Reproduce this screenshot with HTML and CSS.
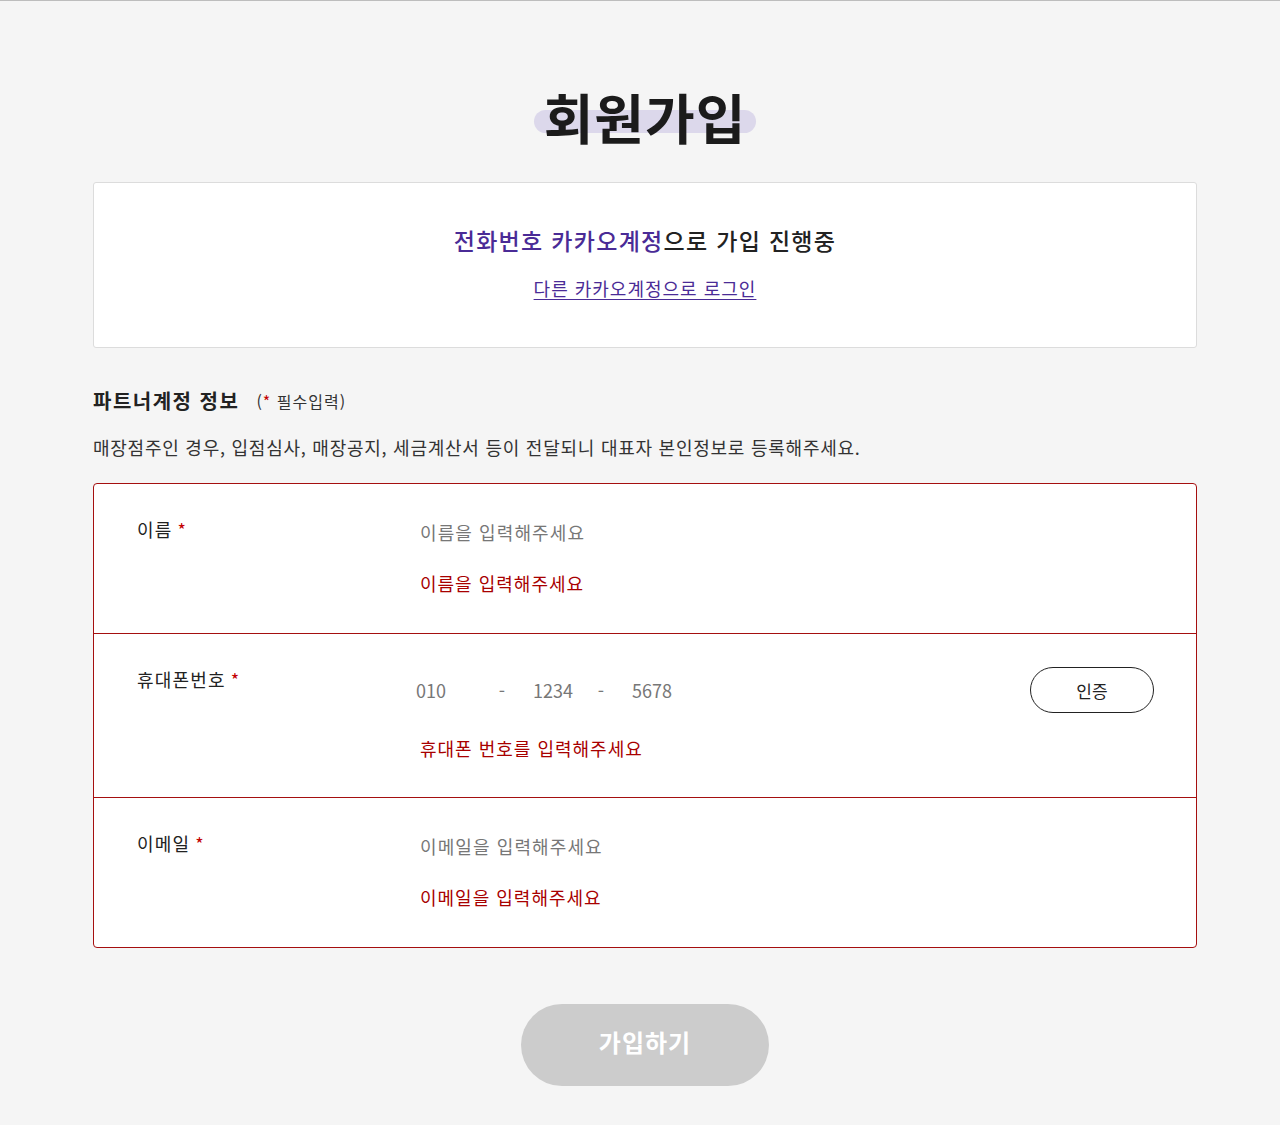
FILE: index.html
```html
<!DOCTYPE html>
<html lang="ko">
<head>
    <meta charset="UTF-8">
    <meta name="viewport" content="width=device-width, initial-scale=1.0">
    <title>회원가입</title>
    <link rel="stylesheet" href="styles.css">
</head>
<body>
    <div class="wrap">
        <h1 class="page-title"><span class="title-mark">회원가입</span></h1>

        <div class="kakao-box">
            <p class="kakao-status"><span class="point">전화번호 카카오계정</span>으로 가입 진행중</p>
            <a href="#" class="kakao-link">다른 카카오계정으로 로그인</a>
        </div>

        <div class="section-head">
            <h2 class="section-title">파트너계정 정보</h2>
            <span class="required-note">(<em>*</em> 필수입력)</span>
        </div>
        <p class="section-desc">매장점주인 경우, 입점심사, 매장공지, 세금계산서 등이 전달되니 대표자 본인정보로 등록해주세요.</p>

        <form class="join-form">
            <div class="form-row">
                <label class="form-label" for="name">이름<em>*</em></label>
                <div class="form-field">
                    <div class="field-line">
                        <input type="text" id="name" class="text-input" placeholder="이름을 입력해주세요">
                    </div>
                    <p class="error-msg">이름을 입력해주세요</p>
                </div>
            </div>
            <div class="form-row form-row-phone">
                <label class="form-label" for="phone1">휴대폰번호<em>*</em></label>
                <div class="form-field">
                    <div class="field-line field-phone">
                        <div class="phone">
                            <input type="text" id="phone1" class="phone-input phone-first" placeholder="010">
                            <span class="phone-dash">-</span>
                            <input type="text" class="phone-input" placeholder="1234">
                            <span class="phone-dash">-</span>
                            <input type="text" class="phone-input" placeholder="5678">
                        </div>
                        <button type="button" class="verify-btn">인증</button>
                    </div>
                    <p class="error-msg">휴대폰 번호를 입력해주세요</p>
                </div>
            </div>
            <div class="form-row">
                <label class="form-label" for="email">이메일<em>*</em></label>
                <div class="form-field">
                    <div class="field-line">
                        <input type="text" id="email" class="text-input" placeholder="이메일을 입력해주세요">
                    </div>
                    <p class="error-msg">이메일을 입력해주세요</p>
                </div>
            </div>
        </form>

        <div class="submit-area">
            <button type="button" class="submit-btn" disabled>가입하기</button>
        </div>
    </div>
</body>
</html>
```

FILE: styles.css
```css
* {
    box-sizing: border-box;
}
body {
    margin: 0;
    border-top: 1px solid #bdbdbd;
    background-color: #f5f5f5;
    font-family: "Noto Sans CJK KR", "Noto Sans", sans-serif;
    color: #222;
}
.wrap {
    width: 1104px;
    margin: 0 auto;
    padding-top: 83px;
    padding-bottom: 39px;
    position: relative;
    left: 5px;
}
.page-title {
    margin: 0;
    text-align: center;
    font-size: 54px;
    line-height: 65px;
    font-weight: 700;
    letter-spacing: 1px;
    color: #1b1b1b;
}
.title-mark {
    position: relative;
    z-index: 0;
    display: inline-block;
}
.title-mark::before {
    content: "";
    position: absolute;
    z-index: -1;
    left: -10px;
    right: -10px;
    top: 26px;
    height: 23px;
    border-radius: 12px;
    background-color: #dcd8eb;
}
.kakao-box {
    margin-top: 33px;
    background-color: #fff;
    border: 1px solid #dcdcdc;
    border-radius: 3px;
    padding: 40px 0 45px;
    text-align: center;
}
.kakao-status {
    margin: 0;
    font-size: 23px;
    line-height: 34px;
    font-weight: 500;
    letter-spacing: 1.3px;
    color: #222;
}
.point {
    color: #4a2b96;
}
.kakao-link {
    display: inline-block;
    margin-top: 18px;
    font-size: 18px;
    line-height: 27px;
    letter-spacing: 1px;
    color: #4a2b96;
    text-decoration: underline;
    text-underline-offset: 3px;
}
.section-head {
    display: flex;
    align-items: center;
    margin-top: 38px;
}
.section-title {
    margin: 0;
    font-size: 20px;
    line-height: 30px;
    font-weight: 700;
    letter-spacing: 1.5px;
    color: #222;
}
.required-note {
    margin-left: 17px;
    font-size: 16px;
    letter-spacing: 1px;
    color: #333;
}
.required-note em,
.form-label em {
    font-style: normal;
    color: #c30000;
}
.form-label em {
    margin-left: 5px;
}
.section-desc {
    margin: 18px 0 0;
    font-size: 18px;
    line-height: 27px;
    letter-spacing: 0.75px;
    color: #333;
}
.join-form {
    margin-top: 22px;
    background-color: #fff;
    border: 1px solid #a50f0f;
    border-radius: 4px;
}
.form-row {
    display: grid;
    grid-template-columns: 283px 1fr;
    padding: 32px 42px 37px 43px;
    border-top: 1px solid #a50f0f;
}
.form-row:first-child {
    border-top: none;
}
.form-row-phone {
    padding-bottom: 36px;
}
.form-label {
    font-size: 18px;
    line-height: 26px;
    letter-spacing: 1.2px;
    color: #222;
}
.field-line {
    display: flex;
    align-items: center;
    justify-content: space-between;
    min-height: 32px;
}
.field-phone {
    min-height: 46px;
    margin-top: 1px;
}
.text-input,
.phone-input {
    border: none;
    outline: none;
    padding: 0;
    background: transparent;
    font-family: inherit;
    font-size: 18px;
    line-height: 32px;
    height: 32px;
    color: #222;
}
.text-input {
    width: 400px;
    letter-spacing: 1.1px;
}
.text-input::placeholder,
.phone-input::placeholder {
    color: #777;
}
.phone {
    display: flex;
    align-items: center;
    margin-left: -4px;
}
.phone-input {
    width: 58px;
}
.phone-first {
    width: 76px;
}
.phone-dash {
    width: 20px;
    margin-right: 21px;
    text-align: center;
    font-size: 18px;
    color: #777;
}
.verify-btn {
    width: 124px;
    height: 46px;
    border: 1px solid #222;
    border-radius: 23px;
    background-color: #fff;
    font-family: inherit;
    font-size: 17px;
    color: #222;
    cursor: pointer;
}
.error-msg {
    margin: 22px 0 0;
    font-size: 18px;
    line-height: 26px;
    letter-spacing: 1px;
    color: #a80000;
}
.submit-area {
    margin-top: 56px;
    text-align: center;
}
.submit-btn {
    width: 248px;
    height: 82px;
    padding: 0 0 8px;
    border: none;
    border-radius: 41px;
    background-color: #cccccc;
    color: #fff;
    font-family: inherit;
    font-size: 24px;
    font-weight: 700;
    letter-spacing: 1px;
}
```
